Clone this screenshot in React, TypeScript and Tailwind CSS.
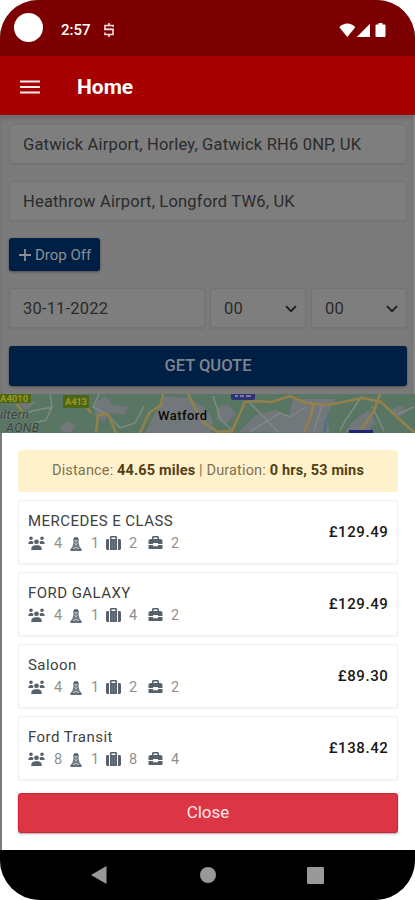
import type { ReactNode } from 'react';

const vehicles = [
  { name: 'MERCEDES E CLASS', price: '£129.49', seats: 4, child: 1, large: 2, small: 2 },
  { name: 'FORD GALAXY', price: '£129.49', seats: 4, child: 1, large: 4, small: 2 },
  { name: 'Saloon', price: '£89.30', seats: 4, child: 1, large: 2, small: 2 },
  { name: 'Ford Transit', price: '£138.42', seats: 8, child: 1, large: 8, small: 4 },
];

function StatusBar() {
  return (
    <div className="flex h-14 items-center bg-[#7c0000] pl-[14px] pr-[28px] text-white">
      <span className="mb-0.5 h-[29px] w-[29px] rounded-full bg-white" />
      <span className="ml-[18px] mt-1 w-[29px] text-[15px] font-medium leading-none">2:57</span>
      <svg className="ml-[13px] mt-1" width="12" height="16" viewBox="0 0 12 16" fill="none" stroke="#f5dede" strokeWidth="1.6">
        <path d="M10 5V3.500H2v3.700h8v5.300H2V10.500M6 1v2.500M6 12.500V15" />
        <path d="M1 7.500h10" strokeWidth="1.5" />
      </svg>
      <svg className="ml-auto mt-[3px]" width="48" height="16" viewBox="0 0 48 16" fill="#fff">
        <path d="M.3 5.2C4.8.4 11.8.4 16.3 5.2L8.3 15z" />
        <path d="M31 1.8V15H17.8z" />
        <path d="M39.5 1h4v1.500h2c.6 0 1 .4 1 1V14c0 .6-.4 1-1 1h-8c-.6 0-1-.4-1-1V3.500c0-.6.4-1 1-1h2z" />
      </svg>
    </div>
  );
}

function AppBar() {
  return (
    <div className="flex h-[59px] items-center bg-[#a60000] pl-5 text-white">
      <svg className="mt-0.5" width="20" height="14" viewBox="0 0 20 14" stroke="#ffecec" strokeWidth="2.2">
        <path d="M0 1.500h20M0 7h20M0 12.500h20" />
      </svg>
      <h1 className="ml-[37px] mt-1 text-[21px] font-bold leading-none">Home</h1>
    </div>
  );
}

function Field({ className, children }: { className: string; children: ReactNode }) {
  return (
    <div
      className={`flex h-10 items-center rounded-[3px] border border-[#747474] bg-[#7e7e7e] pl-[13px] pt-0.5 text-[16.5px] tracking-[0.18px] text-[#2b2b2b] shadow-[0_1px_2px_rgba(0,0,0,0.08)] ${className}`}
    >
      {children}
    </div>
  );
}

function Chevron() {
  return (
    <svg width="12" height="8" viewBox="0 0 12 8" fill="none" stroke="#1c1c1c" strokeWidth="1.8">
      <path d="M1 1.2l5 5 5-5" />
    </svg>
  );
}

function QuoteForm() {
  return (
    <div className="flex h-[279px] flex-col border-r-2 border-[#858585] pl-[9px] pr-[6px] pt-[9px] shadow-[inset_0_4px_4px_rgba(0,0,0,0.12)]">
      <Field className="">Gatwick Airport, Horley, Gatwick RH6 0NP, UK</Field>
      <Field className="mt-[17px]">Heathrow Airport, Longford TW6, UK</Field>
      <button className="mt-[17px] flex h-[33px] w-[91px] items-center rounded-[3px] bg-[#001f45] pl-[10px] pt-0.5 text-[15px] text-[#8d8f92] shadow-[0_1px_3px_rgba(0,0,0,0.4)]">
        <svg className="mb-0.5 mr-1" width="12" height="12" viewBox="0 0 12 12" stroke="#8d8f92" strokeWidth="1.8">
          <path d="M6 0v12M0 6h12" />
        </svg>
        <span className="whitespace-nowrap">Drop Off</span>
      </button>
      <div className="mt-[17px] flex gap-[5px]">
        <Field className="w-[196px]">30-11-2022</Field>
        <Field className="w-24 justify-between pr-2">
          00
          <Chevron />
        </Field>
        <Field className="w-24 justify-between pr-2">
          00
          <Chevron />
        </Field>
      </div>
      <button className="mt-[18px] h-10 rounded-[3px] bg-[#001f45] text-[16.5px] font-medium text-[#7f858e] shadow-[0_1px_3px_rgba(0,0,0,0.4)]">
        GET QUOTE
      </button>
    </div>
  );
}

function MapStrip() {
  return (
    <svg className="block" width="415" height="39" viewBox="0 0 415 39" fontFamily="Roboto, sans-serif">
      <rect width="415" height="39" fill="#587663" />
      <g fill="#71777a">
        <path d="M95 9l10-7 8 9 15 2-4 8-14-2-6 9-9-6z" />
        <path d="M145 39l9-18 10-19 26 2 15 10 8 12-2 13z" />
        <path d="M217 14l10-4 9 10-10 10-9-4zM239 38l17-17 20-5 13 5 4-16h42l-8 18 3 16zM345 38l9-12 15-10 7 12-9 10zM390 16l12-5 5 7-10 7z" />
        <path d="M60 33l8-6 8 5-5 6h-9zM24 5l12 3-9 8-9-5z" />
      </g>
      <g fill="none" stroke="#7e8b82" strokeWidth="1.5">
        <path d="M50 0l2 13-6 13-12 3-9 10M0 20l18 3 14-6 20-4M99 0l-6 13 15 8 12 13 15-5 9-17M213 2l8 24 12 11M248 7l12 12 18 19M305 13l-15 10-10-4-29 18M322 12l-8 25M362 2l-17 25-5 10M372 12l12 25M398 20l16-7" />
      </g>
      <g fill="none" stroke="#94804a" strokeWidth="2.5">
        <path d="M96 39l2-18 10-1 8 19M82 6l9 13M16 10l8 9" />
        <path d="M163 0l-2 11-12 8-9 20M188 0l7 14 8 14 15 10 14-1 13-29 12-1 15 1 18-6 16 7 22 2 25-5 10-2 18 4 17 16 17 15" />
        <path d="M380 0l-6 17-13 19-9 3M314 8l-3 14-7 16" />
      </g>
      <path d="M330 20l-4 8-2 11" fill="none" stroke="#4d7186" strokeWidth="2.5" />
      <rect x="-3" width="34" height="9" rx="1" fill="#4d6517" />
      <text x="0" y="7.5" fontSize="9.5" fontWeight="700" fill="#9a991d">A4010</text>
      <rect x="63" y="1" width="26" height="13" rx="1" fill="#4d6517" />
      <text x="65" y="10.5" fontSize="9.5" fontWeight="700" fill="#9a991d" textLength="22">A413</text>
      <rect x="231" y="-5" width="24" height="11" rx="2" fill="#303276" />
      <path d="M235 2h3M240 2h4M246 2h5" stroke="#7c7ca3" strokeWidth="2" />
      <rect x="349" y="36" width="24" height="8" fill="#202479" />
      <g fontSize="12.5" fontStyle="italic" fill="#35463c" stroke="#707d75" strokeWidth="1.5" paintOrder="stroke" letterSpacing=".3">
        <text x="0" y="25">iltern</text>
        <text x="6" y="38">AONB</text>
      </g>
      <text x="158" y="26" fontSize="13" fontWeight="500" fill="#090909" stroke="#747b78" strokeWidth="1.5" paintOrder="stroke" textLength="49">
        Watford
      </text>
    </svg>
  );
}

/* Three people, the middle one in front */
function Passengers() {
  return (
    <svg width="17" height="15" viewBox="0 0 17 15" fill="#56616c">
      <circle cx="3" cy="2.2" r="1.800" />
      <circle cx="14" cy="2.2" r="1.800" />
      <path d="M.3 7.500C.3 5.700 1.500 4.900 3 4.900c1.200 0 2.200.4 2.600 1.300L4.800 8H.3zM16.700 7.500c0-1.800-1.200-2.600-2.700-2.600-1.200 0-2.200.4-2.600 1.300l.8 1.800h4.500z" />
      <circle cx="8.500" cy="5.800" r="2.400" />
      <path d="M3.300 14v-1.200c0-2.200 1.700-3.600 3.800-3.600h2.800c2.100 0 3.800 1.400 3.800 3.600V14z" />
    </svg>
  );
}

/* Child sitting in a booster seat */
function ChildSeat() {
  return (
    <svg className="mt-0.5" width="12" height="14" viewBox="0 0 12 14">
      <path d="M6 0c1.900 0 2.800 1.300 2.800 3.300L8.500 5l1 4.500L11.500 12v2H.5v-2l2-2.500 1-4.500-.3-1.700C3.200 1.300 4.100 0 6 0z" fill="#727b83" />
      <path d="M3.800 1.600h4.400" stroke="#4f5962" strokeWidth="1.500" />
      <circle cx="6" cy="4" r="1.300" fill="#aeb4b9" />
      <path d="M4.500 6l1.500 2 1.500-2M3 11.800L6 10l3 1.800" fill="none" stroke="#c3c8cc" />
      <path d="M.8 13h3.500M7.700 13h3.500" stroke="#56616c" strokeWidth="1.600" />
    </svg>
  );
}

function LargeCase() {
  return (
    <svg width="15" height="14" viewBox="0 0 15 14" fill="#56616c">
      <path d="M4 3V1.300C4 .6 4.500 0 5.200 0h4.600c.7 0 1.200.6 1.200 1.300V14H4V3h1.500V1.500h4V3z" fillRule="evenodd" />
      <path d="M1.500 3H3v11H1.500C.7 14 0 13.300 0 12.500v-8C0 3.700.7 3 1.500 3zM12 3h1.500c.8 0 1.500.7 1.500 1.500v8c0 .8-.7 1.500-1.500 1.500H12z" />
      <path d="M6.200 4v9M8.800 4v9" stroke="#89919a" strokeWidth=".6" />
    </svg>
  );
}

function SmallCase() {
  return (
    <svg width="15" height="14" viewBox="0 0 15 14" fill="#56616c">
      <path d="M4 3V1.500C4 .7 4.700 0 5.500 0h4c.8 0 1.500.7 1.500 1.500V3h2l1.500 1.500V8H10V7H5v1H.5V4.500L2 3zm1.500 0h4V1.500h-4z" fillRule="evenodd" />
      <path d="M.5 9H5v1.300h5V9h4.500v3c0 .6-.4 1-1 1h-12c-.6 0-1-.4-1-1z" />
    </svg>
  );
}

function VehicleCard({ vehicle }: { vehicle: (typeof vehicles)[number] }) {
  return (
    <div className="flex h-16 items-center justify-between rounded-[3px] border border-[#f0f0f0] bg-white pl-[9px] pr-[9px] shadow-[0_1px_2px_rgba(0,0,0,0.05)]">
      <div>
        <div className="text-[15px] leading-[22px] tracking-[0.45px] text-[#414141]">{vehicle.name}</div>
        <div className="flex h-[23px] items-center text-[14.5px] text-[#8f8f8f]">
          <Passengers />
          <span className="ml-[9px] w-4 pt-0.5">{vehicle.seats}</span>
          <ChildSeat />
          <span className="ml-[9px] w-[15px] pt-0.5">{vehicle.child}</span>
          <LargeCase />
          <span className="ml-[8px] w-[19px] pt-0.5">{vehicle.large}</span>
          <SmallCase />
          <span className="ml-[8px] pt-0.5">{vehicle.small}</span>
        </div>
      </div>
      <span className="mr-[-0.5px] text-[15px] font-medium tracking-[0.6px] text-[#181818]">{vehicle.price}</span>
    </div>
  );
}

function QuoteSheet() {
  return (
    <div className="ml-[2px] h-[417px] bg-white pl-4 pr-[17px] pt-[17px]">
      <div className="flex h-[42px] items-center justify-center whitespace-pre rounded-[3px] bg-[#fff1cc] text-[14.5px] tracking-[0.15px] text-[#81724c]">
        Distance: <b className="font-bold text-[#533f13]">44.65 miles</b> | Duration:{' '}
        <b className="font-bold text-[#533f13]">0 hrs, 53 mins</b>
      </div>
      <div className="mt-2 flex flex-col gap-2">
        {vehicles.map((v) => (
          <VehicleCard key={v.name} vehicle={v} />
        ))}
      </div>
      <button className="mt-[13px] h-10 w-full rounded-[3px] border border-[#d32231] bg-[#dc3545] text-[17px] text-[#ffe9eb] shadow-[0_1px_2px_rgba(0,0,0,0.35)]">
        Close
      </button>
    </div>
  );
}

function NavBar() {
  return (
    <div className="flex h-[50px] items-center bg-black">
      <svg className="ml-[91px]" width="16" height="18" viewBox="0 0 16 18" fill="#999">
        <path d="M15.5 0v18L0 9z" />
      </svg>
      <span className="ml-[93px] h-4 w-4 rounded-full bg-[#999]" />
      <span className="ml-[91px] h-[17px] w-[17px] rounded-[1px] bg-[#999]" />
    </div>
  );
}

export default function App() {
  return (
    <div className="h-[900px] w-[415px] bg-white font-['Roboto',sans-serif]">
      <div className="h-[900px] overflow-hidden rounded-t-[38px] rounded-b-[40px] bg-[#7b7b7b]">
        <StatusBar />
        <AppBar />
        <QuoteForm />
        <MapStrip />
        <QuoteSheet />
        <NavBar />
      </div>
    </div>
  );
}
